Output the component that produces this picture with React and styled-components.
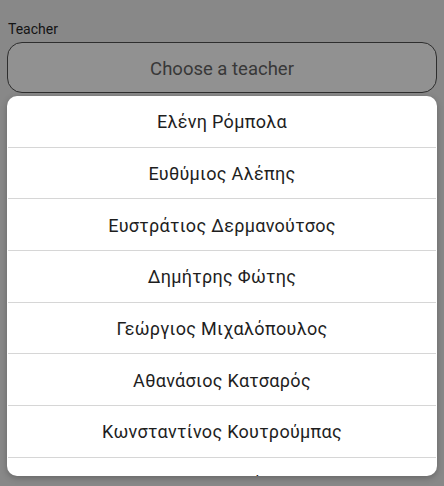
import React from 'react';
import styled, { createGlobalStyle } from 'styled-components';

const GlobalStyle = createGlobalStyle`
  html, body {
    margin: 0;
    padding: 0;
    background: #888888;
    font-family: Roboto, "Noto Sans", "Liberation Sans", sans-serif;
  }
`;

const teachers = [
  'Ελένη Ρόμπολα',
  'Ευθύμιος Αλέπης',
  'Ευστράτιος Δερμανούτσος',
  'Δημήτρης Φώτης',
  'Γεώργιος Μιχαλόπουλος',
  'Αθανάσιος Κατσαρός',
  'Κωνσταντίνος Κουτρούμπας',
  'Μαρία Τσελέντη',
];

const Screen = styled.div`
  width: 444px;
  height: 486px;
  box-sizing: border-box;
  padding: 21px 7px 0 7px;
  background: #888888;
  overflow: hidden;
`;

const Label = styled.div`
  font-size: 14px;
  line-height: 16px;
  color: #141414;
  padding-left: 1px;
  margin-bottom: 5px;
`;

const SelectBox = styled.div`
  height: 51px;
  box-sizing: border-box;
  border: 1px solid #2e2e2e;
  border-radius: 15px;
  background: #919191;
  display: flex;
  align-items: center;
  justify-content: center;
  padding-top: 2px;
  font-size: 18.5px;
  color: #383838;
`;

const Panel = styled.div`
  margin-top: 3px;
  height: 380px;
  background: #ffffff;
  border-radius: 10px;
  overflow: hidden;
  box-shadow: 0 2px 6px rgba(0, 0, 0, 0.25);
`;

const Option = styled.div`
  height: 51.66px;
  box-sizing: border-box;
  border-bottom: 1px solid #d6d6d6;
  margin: 0 1px;
  display: flex;
  align-items: center;
  justify-content: center;
  font-size: 18px;
  letter-spacing: 0.3px;
  color: #1e1e1e;
  padding-top: 1px;
`;

export default function App() {
  return (
    <>
      <GlobalStyle />
      <Screen>
        <Label>Teacher</Label>
        <SelectBox>Choose a teacher</SelectBox>
        <Panel>
          {teachers.map((name) => (
            <Option key={name}>{name}</Option>
          ))}
        </Panel>
      </Screen>
    </>
  );
}
